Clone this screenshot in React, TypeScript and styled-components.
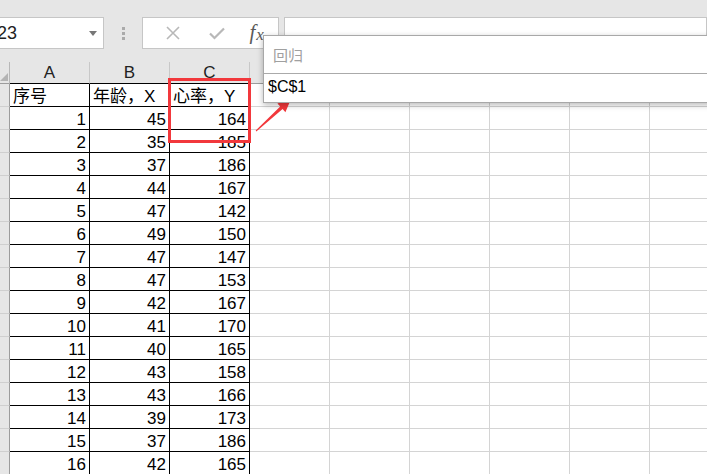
import {FC} from "react";
import styled, {createGlobalStyle} from "styled-components";

const rows: [number, number, number][] = [
    [1, 45, 164],
    [2, 35, 185],
    [3, 37, 186],
    [4, 44, 167],
    [5, 47, 142],
    [6, 49, 150],
    [7, 47, 147],
    [8, 47, 153],
    [9, 42, 167],
    [10, 41, 170],
    [11, 40, 165],
    [12, 43, 158],
    [13, 43, 166],
    [14, 39, 173],
    [15, 37, 186],
    [16, 42, 165],
];

const letters = ["A", "B", "C", "D", "E", "F", "G", "H", "I"];
const headers = ["序号", "年龄，X", "心率，Y"];

const GlobalStyle = createGlobalStyle`
    html, body {
        margin: 0;
        padding: 0;
        background: #e6e6e6;
    }
    body {
        font-family: "Liberation Sans", "Noto Sans CJK SC", sans-serif;
    }
`;

export const App: FC = () => {
    return (
        <Page>
            <GlobalStyle />
            <TopStrip />
            <FormulaBar>
                <NameBox>
                    <span>23</span>
                    <DropArrow />
                </NameBox>
                <Grip>
                    <i />
                    <i />
                    <i />
                </Grip>
                <FuncBox>
                    <FuncIcon>
                        <svg width="14" height="14" viewBox="0 0 14 14">
                            <path d="M1 1 L13 13 M13 1 L1 13" stroke="#b8b8b8" strokeWidth="1.6" fill="none" />
                        </svg>
                    </FuncIcon>
                    <FuncIcon>
                        <svg width="16" height="13" viewBox="0 0 16 13">
                            <path d="M1 6.5 L5.5 11 L15 1.5" stroke="#b8b8b8" strokeWidth="2.2" fill="none" />
                        </svg>
                    </FuncIcon>
                    <FxLabel>
                        f<em>x</em>
                    </FxLabel>
                </FuncBox>
                <FormulaInput />
            </FormulaBar>
            <Sheet>
                <Corner />
                {letters.map((l, i) => (
                    <ColHeader key={l} $boxed={i < 3}>
                        {l}
                    </ColHeader>
                ))}
                <RowHeader />
                {letters.map((l, i) => (
                    <Cell key={"h" + l} $boxed={i < 3}>
                        {headers[i] ?? ""}
                    </Cell>
                ))}
                {rows.map((r) => (
                    <RowBlock key={r[0]} values={r} />
                ))}
            </Sheet>
            <Highlight />
            <Callout width="707" height="474">
                <polygon
                    points="256.3,131.4 282.6,109.1 285.4,112.2 291,99 277.4,103.4 280.2,106.5 255.7,130.6"
                    fill="#f2383c"
                />
            </Callout>
            <Dialog>
                <DialogTitle>回归</DialogTitle>
                <DialogInput>$C$1</DialogInput>
            </Dialog>
        </Page>
    );
};

const RowBlock: FC<{values: [number, number, number]}> = ({values}) => (
    <>
        <RowHeader />
        {letters.map((l, i) => (
            <Cell key={l} $boxed={i < 3} $number>
                {i < 3 ? values[i] : ""}
            </Cell>
        ))}
    </>
);

export default App;

const Page = styled.div`
    position: relative;
    width: 707px;
    height: 474px;
    overflow: hidden;
    background: #e6e6e6;
`;

const TopStrip = styled.div`
    height: 17px;
`;

const FormulaBar = styled.div`
    display: flex;
    align-items: stretch;
    height: 32px;
    margin-bottom: 13px;
`;

const NameBox = styled.div`
    box-sizing: border-box;
    width: 105px;
    margin-left: -1px;
    display: flex;
    align-items: center;
    justify-content: space-between;
    padding: 0 6px 0 0;
    background: #fff;
    border: 1px solid #c6c6c6;
    font-size: 18px;
    color: #222;
    span {
        margin-left: -3px;
    }
`;

const DropArrow = styled.div`
    width: 0;
    height: 0;
    border-left: 4px solid transparent;
    border-right: 4px solid transparent;
    border-top: 5px solid #777;
`;

const Grip = styled.div`
    width: 38px;
    display: flex;
    flex-direction: column;
    align-items: center;
    justify-content: center;
    gap: 2px;
    i {
        display: block;
        width: 3px;
        height: 3px;
        background: #aaa;
    }
`;

const FuncBox = styled.div`
    box-sizing: border-box;
    width: 137px;
    display: flex;
    align-items: center;
    justify-content: space-around;
    padding: 0 4px 0 8px;
    background: #fff;
    border: 1px solid #c6c6c6;
`;

const FuncIcon = styled.span`
    display: flex;
    width: 24px;
    justify-content: center;
`;

const FxLabel = styled.span`
    font-family: "Liberation Serif", serif;
    font-style: italic;
    font-size: 21px;
    line-height: 1;
    color: #5a5a5a;
    margin-top: -2px;
    em {
        font-size: 17px;
        position: relative;
        top: 1px;
        margin-left: 1px;
    }
`;

const FormulaInput = styled.div`
    box-sizing: border-box;
    flex: 1;
    margin-left: 5px;
    background: #fff;
    border: 1px solid #c6c6c6;
`;

const Sheet = styled.div`
    display: grid;
    grid-template-columns: 10px repeat(9, 80px);
    grid-template-rows: 22px repeat(17, 23px);
    background: #fff;
`;

const Corner = styled.div`
    position: relative;
    box-sizing: border-box;
    background: #e6e6e6;
    border-right: 1px solid #b8b8b8;
    border-bottom: 1px solid #9c9c9c;
    &::after {
        content: "";
        position: absolute;
        right: 1px;
        bottom: 2px;
        border-left: 8px solid transparent;
        border-bottom: 8px solid #b4b4b4;
    }
`;

const ColHeader = styled.div<{$boxed?: boolean}>`
    box-sizing: border-box;
    display: flex;
    align-items: center;
    justify-content: center;
    padding-top: 1px;
    background: #e6e6e6;
    border-right: 1px solid #c8c8c8;
    border-bottom: 1px solid ${(p) => (p.$boxed ? "#000" : "#9c9c9c")};
    font-size: 17px;
    color: #222;
`;

const RowHeader = styled.div`
    box-sizing: border-box;
    background: #e6e6e6;
    border-right: 1px solid #9c9c9c;
    border-bottom: 1px solid #cfcfcf;
`;

const Cell = styled.div<{$boxed?: boolean; $number?: boolean}>`
    box-sizing: border-box;
    display: flex;
    align-items: flex-end;
    justify-content: ${(p) => (p.$number ? "flex-end" : "flex-start")};
    padding: 0 3px 0 3px;
    border-right: 1px solid ${(p) => (p.$boxed ? "#000" : "#d4d4d4")};
    border-bottom: 1px solid ${(p) => (p.$boxed ? "#000" : "#d4d4d4")};
    font-size: 17px;
    line-height: 19px;
    color: #000;
    white-space: pre;
    overflow: hidden;
`;

const Highlight = styled.div`
    position: absolute;
    left: 168px;
    top: 78px;
    width: 83px;
    height: 65px;
    box-sizing: border-box;
    border: 3px solid #f2383c;
    pointer-events: none;
`;

const Callout = styled.svg`
    position: absolute;
    left: 0;
    top: 0;
    pointer-events: none;
`;

const Dialog = styled.div`
    position: absolute;
    left: 263px;
    top: 35px;
    width: 470px;
    box-sizing: border-box;
    background: #fff;
    border: 1px solid #a8a8a8;
    box-shadow: 0 2px 6px rgba(0, 0, 0, 0.28);
`;

const DialogTitle = styled.div`
    height: 37px;
    display: flex;
    align-items: center;
    padding-left: 9px;
    border-bottom: 1px solid #aaa;
    font-family: "Noto Sans CJK SC", sans-serif;
    font-size: 15px;
    color: #a0a0a0;
`;

const DialogInput = styled.div`
    height: 28px;
    display: flex;
    align-items: center;
    padding: 0 0 2px 4px;
    box-sizing: border-box;
    font-size: 16px;
    color: #000;
`;
